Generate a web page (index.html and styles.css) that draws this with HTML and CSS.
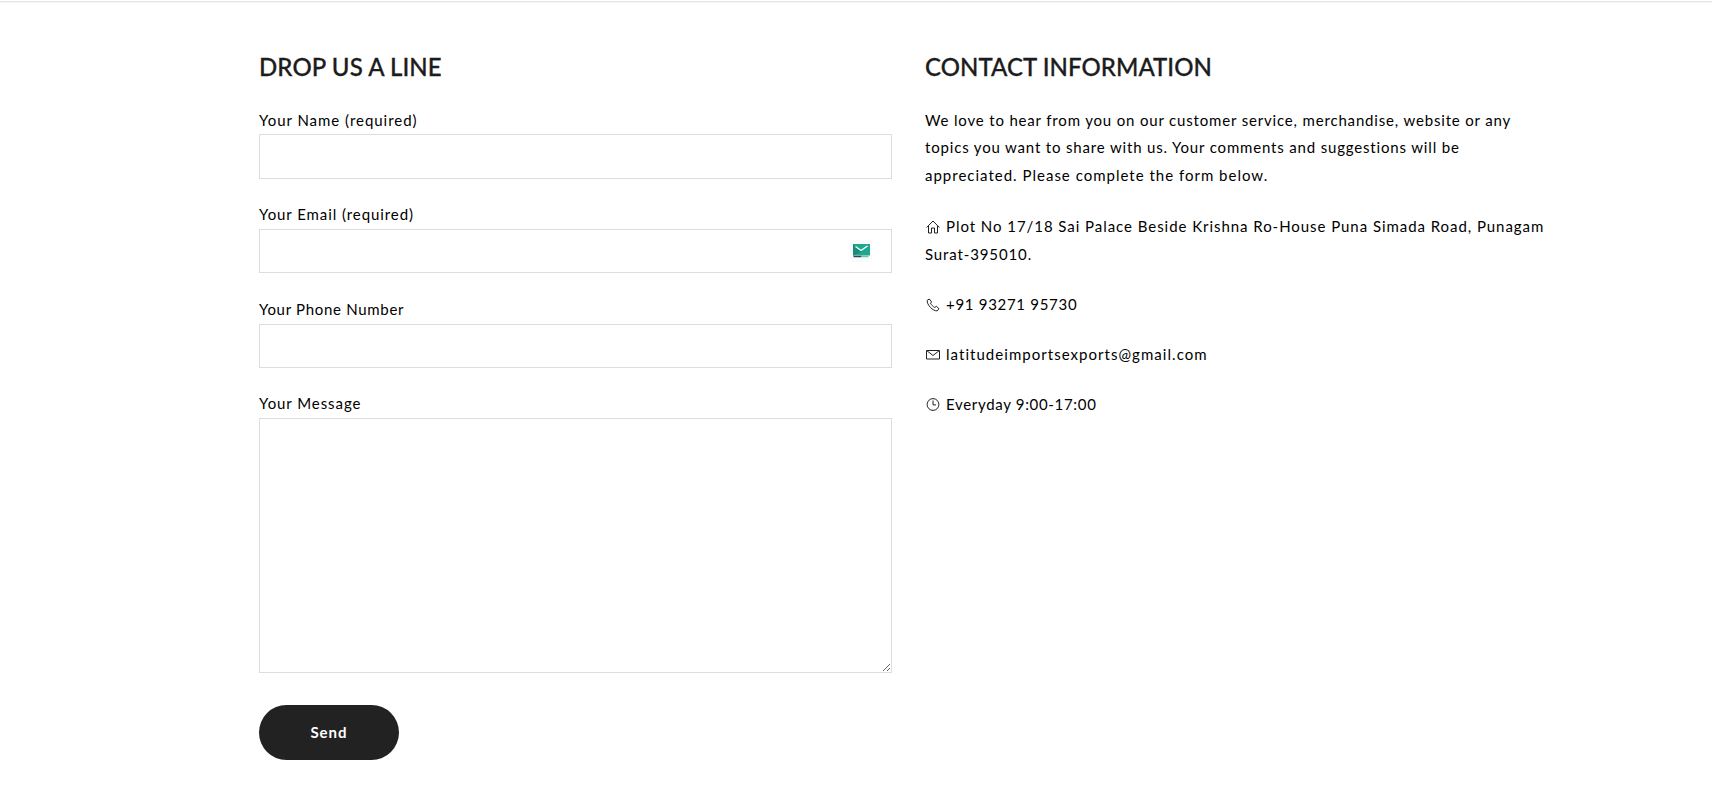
FILE: index.html
```html
<!DOCTYPE html>
<html lang="en">
<head>
<meta charset="utf-8">
<title>Contact</title>
<link rel="stylesheet" href="styles.css">
</head>
<body>
<div class="topline"></div>
<main class="container">
  <section class="col">
    <h3 class="title"><span class="t t-drop">DROP US A LINE</span></h3>
    <form class="form">
      <label class="group"><span class="t l-name">Your Name (required)</span><input class="field" type="text"></label>
      <label class="group"><span class="t l-email">Your Email (required)</span><input class="field" type="email">
        <svg class="badge" viewBox="0 0 22 22"><rect width="22" height="22" rx="2" fill="#f9fafa"/><rect x="3" y="4" width="17" height="11.500" fill="#1fa88e"/><path d="M3 4l8.500 8L3 15.500z" fill="#198c79"/><path d="M5.500 6.500l5.500 4 6.500-4.500" fill="none" stroke="#fff" stroke-width="1.400"/><path d="M3.500 16.500h8" stroke="#31415f" stroke-width="1.500"/><path d="M11.500 16.500h7" stroke="#68c7b5" stroke-width="1.500"/></svg>
      </label>
      <label class="group"><span class="t l-phone">Your Phone Number</span><input class="field" type="tel"></label>
      <label class="group group-area"><span class="t l-msg">Your Message</span><textarea class="field area"></textarea></label>
      <button class="send" type="button"><span class="t t-send">Send</span></button>
    </form>
  </section>
  <section class="col">
    <h3 class="title"><span class="t t-contact">CONTACT INFORMATION</span></h3>
    <div class="info">
      <p class="intro"><span class="t p1">We love to hear from you on our customer service, merchandise, website or any</span><br><span class="t p2">topics you want to share with us. Your comments and suggestions will be</span><br><span class="t p3">appreciated. Please complete the form below.</span></p>
      <p><svg class="icon" viewBox="0 0 14 14"><path d="M.6 7.500L7 1l6.400 6.500M2.500 6v7h3V8h3v5h3V6"/></svg><span class="t a1">Plot No 17/18 Sai Palace Beside Krishna Ro-House Puna Simada Road, Punagam</span><br><span class="t a2">Surat-395010.</span></p>
      <p><svg class="icon" viewBox="0 0 14 14"><path d="M3.300 1L1.200 2.300C.5 6.500 7 13.500 11.300 12.800L13 10.700 10.300 8.300 8.800 9.500C7.500 9 5.200 6.700 4.500 5.200L5.600 3.900z"/></svg><span class="t ph">+91 93271 95730</span></p>
      <p><svg class="icon" viewBox="0 0 14 14"><path d="M.5 2.500h13v8.500H.5zM1 2.800L7 7.500l6-4.700"/></svg><span class="t em">latitudeimportsexports@gmail.com</span></p>
      <p><svg class="icon" viewBox="0 0 14 14"><circle cx="7" cy="6.500" r="5.900"/><path d="M7 2.500v4.400h3"/></svg><span class="t ev">Everyday 9:00-17:00</span></p>
    </div>
  </section>
</main>
</body>
</html>
```
FILE: styles.css
```css
* { box-sizing: border-box; }
body { margin: 0; background: #fff; color: #000; font: 15px/27.75px Lato, sans-serif; font-variant-ligatures: none; }
.topline { height: 3px; margin-top: 1px; border-top: 1px solid #e6e6e6; background: linear-gradient(#f1f1f1, #fff); }
.container { display: flex; gap: 33px; width: 1300px; padding-left: 259px; box-sizing: content-box; }
.col { width: 633px; flex: none; }
.title { margin: 47.5px 0 25.5px; font-size: 24px; line-height: 29.5px; font-weight: 500; color: #1c1c1c; -webkit-text-stroke: 0.3px #1c1c1c; }
.t { white-space: nowrap; }
.group { display: block; height: 94.7px; position: relative; }
.group .t { display: block; width: max-content; }
.field { display: block; width: 633px; height: 44.5px; border: 1px solid #ddd; background: #fff; padding: 0 15px; outline: 0; }
.group-area { height: 283px; margin-top: -0.6px; }
.area { height: 255px; margin-top: 0.6px; resize: vertical; padding: 10px; }
.badge { position: absolute; right: 20px; top: 39px; width: 22px; height: 22px; }
.send { display: block; margin-top: 31.6px; width: 140px; height: 55px; border: 0; border-radius: 28px; background: #222; color: #fff; font: 700 15px/55px Lato, sans-serif; padding: 0; }
p { margin: 0 0 22.3px; }
.intro { margin-bottom: 23.4px; }
.icon { width: 14px; height: 14px; margin-right: 6px; margin-left: 1px; vertical-align: -2px; fill: none; stroke: #222; stroke-width: 1; }

/* Tracking */
.t-drop { letter-spacing: 0.1px; }
.t-contact { letter-spacing: 0.05px; }
.l-name { letter-spacing: 0.97px; }
.l-email { letter-spacing: 0.92px; }
.l-phone { letter-spacing: 0.7px; }
.l-msg { letter-spacing: 0.93px; }
.p1 { letter-spacing: 0.83px; }
.p2 { letter-spacing: 0.83px; }
.p3 { letter-spacing: 1px; }
.a1 { letter-spacing: 0.95px; }
.a2 { letter-spacing: 0.87px; }
.ph { letter-spacing: 0.7px; }
.em { letter-spacing: 1.04px; }
.ev { letter-spacing: 0.68px; }
.t-send { letter-spacing: 1px; }
```
